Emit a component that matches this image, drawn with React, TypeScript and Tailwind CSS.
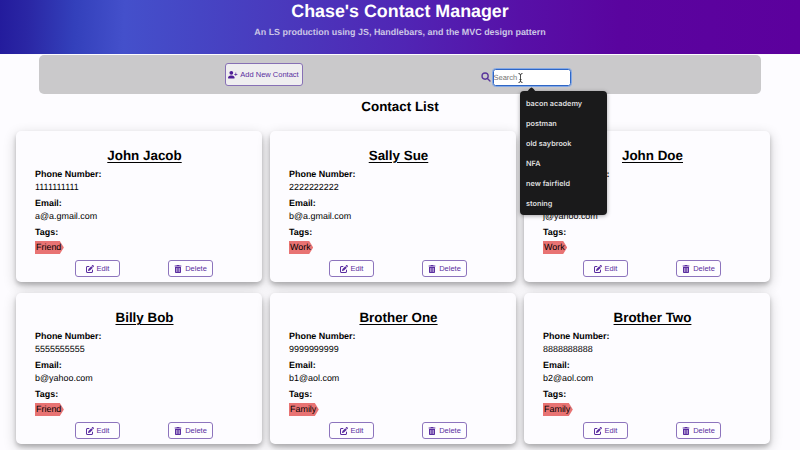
import type { ReactNode } from 'react';
import { FaPenToSquare, FaTrashCan, FaUserPlus } from 'react-icons/fa6';

type Contact = { name: string; phone: string; email: string; tag: string };

const contacts: Contact[] = [
  { name: 'John Jacob', phone: '1111111111', email: 'a@a.gmail.com', tag: 'Friend' },
  { name: 'Sally Sue', phone: '2222222222', email: 'b@a.gmail.com', tag: 'Work' },
  { name: 'John Doe', phone: '3333333333', email: 'j@yahoo.com', tag: 'Work' },
  { name: 'Billy Bob', phone: '5555555555', email: 'b@yahoo.com', tag: 'Friend' },
  { name: 'Brother One', phone: '9999999999', email: 'b1@aol.com', tag: 'Family' },
  { name: 'Brother Two', phone: '8888888888', email: 'b2@aol.com', tag: 'Family' },
];

const suggestions = ['bacon academy', 'postman', 'old saybrook', 'NFA', 'new fairfield', 'stoning'];

function CardButton({ icon, label }: { icon: ReactNode; label: string }) {
  return (
    <button className="flex h-[17px] w-[45px] items-center justify-center gap-[3px] rounded-[3px] border border-[#8d74bd] bg-[#fefdff] text-[7.5px] leading-none text-[#5b2ea0]">
      {icon}
      {label}
    </button>
  );
}

function ContactCard({ contact }: { contact: Contact }) {
  return (
    <article className="h-[151px] rounded-[5px] bg-[#fdfcff] px-[19px] pt-[16px] shadow-[0_4px_13px_rgba(0,0,0,0.2),0_3px_4px_rgba(0,0,0,0.2)]">
      <h3 className="pl-[11px] text-center text-[13.4px] leading-[18px] font-bold underline decoration-1 underline-offset-[1.5px]">
        {contact.name}
      </h3>
      <dl className="mt-[3px] text-[8.95px] leading-[13px]">
        <dt className="font-bold">Phone Number:</dt>
        <dd>{contact.phone}</dd>
        <dt className="mt-[3px] font-bold">Email:</dt>
        <dd>{contact.email}</dd>
        <dt className="mt-[3px] font-bold">Tags:</dt>
      </dl>
      <div className="mt-[2px] flex h-[13px]">
        <span className="bg-[#e87373] pr-[2.5px] pl-[1px] text-[8.95px] leading-[13px] [clip-path:polygon(0_0,calc(100%-4px)_0,100%_50%,calc(100%-4px)_100%,0_100%)]">
          {contact.tag}
        </span>
      </div>
      <div className="mt-[6px] flex justify-between pr-[30px] pl-[40px]">
        <CardButton icon={<FaPenToSquare className="size-[8px]" />} label="Edit" />
        <CardButton icon={<FaTrashCan className="size-[8px]" />} label="Delete" />
      </div>
    </article>
  );
}

function Suggestions() {
  return (
    <div className="absolute top-[22px] left-[27px] z-10 h-[124px] w-[87px] rounded-[4px] bg-[#1a1a1b] pt-[3px] pl-[6.5px] font-['Inter',sans-serif] text-[7.3px] font-semibold text-[#dededf] shadow-[0_1px_4px_rgba(0,0,0,0.35)]">
      <svg className="absolute -top-[4px] left-[6px] h-[5px] w-[11px]" viewBox="0 0 11 5">
        <path d="M0 5C2 4.5 4 .4 5.5.4S9 4.5 11 5Z" fill="#1a1a1b" />
      </svg>
      {suggestions.map((item) => (
        <div key={item} className="h-[20px] leading-[20px]">
          {item}
        </div>
      ))}
    </div>
  );
}

export default function App() {
  return (
    <div className="h-[450px] w-[800px] overflow-hidden bg-[#fdfcff] font-['Liberation_Sans',Arial,sans-serif] text-black [text-rendering:geometricPrecision]">
      <header className="h-[54px] bg-[linear-gradient(92deg,#231b9c_0px,#2a26a4_28px,#3340bb_75px,#4450cb_125px,#4645c4_200px,#4a38bc_290px,#5026b5_400px,#5710a7_520px,#5a049f_620px,#5c009d_800px)] text-center font-bold">
        <h1 className="text-[17.85px] leading-[22px] text-white">Chase's Contact Manager</h1>
        <p className="mt-[3px] text-[8.95px] leading-[14px] text-[#ccc6e6]">
          An LS production using JS, Handlebars, and the MVC design pattern
        </p>
      </header>

      <section className="mx-[39px] mt-px flex h-[39px] rounded-[5px] bg-[#cac9cb]">
        <div className="pt-[8px] pl-[185.5px]">
          <button className="flex h-[23px] w-[78px] items-center justify-center gap-[2.5px] rounded-[3px] border border-[#8770b5] bg-[#efeef0] text-[7.5px] leading-none whitespace-nowrap text-[#5b2ea0]">
            <FaUserPlus className="size-[9.5px] shrink-0 text-[#4f1f96]" />
            Add New Contact
          </button>
        </div>
        <div className="flex pt-[14px] pl-[178px]">
          <svg className="mt-[2.5px] mr-[2px] size-[10px]" viewBox="0 0 10 10" fill="none" stroke="#5a369b" strokeWidth="1.35" strokeLinecap="round">
            <circle cx="4.1" cy="4.1" r="3.1" />
            <path d="M6.4 6.4L9 9" />
          </svg>
          <div className="relative h-[17px] w-[78.5px]">
            <input
              placeholder="Search"
              className="block h-[17px] w-full rounded-[2.5px] border border-[#2f66c5] bg-white text-[7.5px] leading-none outline-1 outline-[#83a8e5] [text-rendering:geometricPrecision] placeholder:text-[#757575]"
            />
            <svg className="absolute top-[4px] left-[25px] h-[10px] w-[5px]" viewBox="0 0 5 10" fill="none" stroke="#333" strokeWidth=".9">
              <path d="M.5.5Q2.5.5 2.5 2V8Q2.5 9.5.5 9.5M4.5.5Q2.5.5 2.5 2M2.5 8Q2.5 9.5 4.5 9.5M1.5 6.5H3.5" />
            </svg>
            <Suggestions />
          </div>
        </div>
      </section>

      <h2 className="mt-[4px] text-center text-[13.4px] leading-[18px] font-bold">Contact List</h2>

      <main className="mt-[15px] ml-[16px] grid w-[754px] grid-cols-3 gap-x-[8px] gap-y-[11px]">
        {contacts.map((contact) => (
          <ContactCard key={contact.name} contact={contact} />
        ))}
      </main>
    </div>
  );
}
